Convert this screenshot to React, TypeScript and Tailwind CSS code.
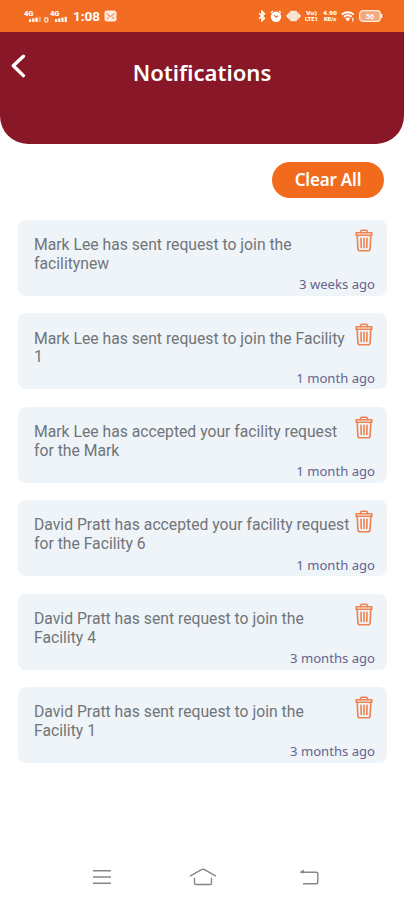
const notifications = [
  { id: 1, lines: ['Mark Lee has sent request to join the', 'facilitynew'], time: '3 weeks ago' },
  { id: 2, lines: ['Mark Lee has sent request to join the Facility', '1'], time: '1 month ago' },
  { id: 3, lines: ['Mark Lee has accepted your facility request', 'for the Mark'], time: '1 month ago' },
  { id: 4, lines: ['David Pratt has accepted your facility request', 'for the Facility 6'], time: '1 month ago' },
  { id: 5, lines: ['David Pratt has sent request to join the', 'Facility 4'], time: '3 months ago' },
  { id: 6, lines: ['David Pratt has sent request to join the', 'Facility 1'], time: '3 months ago' },
]

function TrashIcon() {
  return (
    <svg width="18" height="23" viewBox="0 0 18 23" fill="none" stroke="#ef8250" strokeWidth="1.6" strokeLinejoin="round" strokeLinecap="round">
      <path d="M1.2 3.8h15.6v2.4H1.2z" />
      <path d="M5.6 3.6V2.6Q5.6 1.2 7 1.2h4q1.4 0 1.4 1.4v1" />
      <path d="M2.2 6.6l.7 13.2q.2 2 2.2 2h7.8q2 0 2.2-2l.7-13.2" />
      <path d="M6 9.2l.2 9.4M9 9.2v9.4M12 9.2l-.2 9.4" />
    </svg>
  )
}

function Signal({ bars }: { bars: number }) {
  return (
    <svg width="18" height="13" viewBox="0 0 18 13" fill="#fff">
      <text x="0" y="6" fontSize="7" fontWeight="900" textLength="9.5" lengthAdjust="spacingAndGlyphs" fontFamily="Roboto, sans-serif">4G</text>
      {[0, 1, 2, 3].map(i => (
        <rect key={i} x={5 + i * 3.2} y={9.2 - i * 0.8} width="2.2" height={2.8 + i * 0.8} opacity={i < bars ? 1 : 0.4} />
      ))}
    </svg>
  )
}

function StatusBar() {
  return (
    <div className="flex h-8 items-center justify-between bg-[#f26d21] pr-[21px] pl-[24px] text-white">
      <div className="flex items-center">
        <Signal bars={3} />
        <svg className="mr-px ml-[2px]" width="5" height="13" viewBox="0 0 5 13" fill="none" stroke="#fff" opacity=".8">
          <rect x=".8" y="7.8" width="3" height="4" rx=".8" strokeWidth="1.3" />
        </svg>
        <Signal bars={4} />
        <span className="ml-[5px] font-['Roboto',sans-serif] text-[13.5px] leading-4 font-bold">1:08</span>
        <svg className="ml-[4px]" width="13" height="12" viewBox="0 0 13 12">
          <rect x=".5" y=".5" width="12" height="11" rx="2.5" fill="#fff" opacity=".85" />
          <path d="M2.5 3.5l4 3 4-3M3 9l2-2M10 9L8 7" fill="none" stroke="#f26d21" strokeWidth="1" />
        </svg>
      </div>
      <div className="flex items-center">
        <svg width="8" height="12" viewBox="0 0 8 12" fill="none" stroke="#fff" strokeWidth="1.5">
          <path d="M1 3.3l5.5 5L4 10.8V1.2l2.5 2.5-5.5 5" />
        </svg>
        <svg className="ml-[4px]" width="12" height="13" viewBox="0 0 12 13">
          <circle cx="6" cy="6.8" r="5.2" fill="#fff" />
          <path d="M1 2.8l2-1.7M11 2.8L9 1.1" fill="none" stroke="#fff" strokeWidth="1.3" />
          <path d="M4.3 5.2L6 7.2l2.4-1.5" fill="none" stroke="#f26d21" strokeWidth="1.2" />
        </svg>
        <svg className="ml-[4px]" width="15" height="12" viewBox="0 0 15 12" fill="#fff">
          <rect x="3.2" y=".8" width="8.6" height="10.4" rx="2.6" opacity=".8" />
          <path d="M3 2.8v6.4L0 6zM12 2.8v6.4L15 6z" opacity=".9" />
        </svg>
        <div className="ml-[4px] flex w-[14px] flex-col">
          <svg width="14" height="7" viewBox="0 0 14 7" fill="#fff" fontFamily="Roboto, sans-serif" fontWeight="900">
            <text x="1" y="5.6" fontSize="5.2" textLength="11" lengthAdjust="spacingAndGlyphs">Vo)</text>
          </svg>
          <svg width="14" height="7" viewBox="0 0 14 7" fill="#fff" fontFamily="Roboto, sans-serif" fontWeight="900">
            <text x="0" y="5.4" fontSize="5.2" textLength="13" lengthAdjust="spacingAndGlyphs">LTE1</text>
          </svg>
        </div>
        <div className="ml-[4px] flex w-[14px] flex-col">
          <svg width="14" height="7" viewBox="0 0 14 7" fill="#fff" fontFamily="Roboto, sans-serif" fontWeight="900">
            <text x="0" y="5.6" fontSize="5.2" textLength="14" lengthAdjust="spacingAndGlyphs">4.90</text>
          </svg>
          <svg width="14" height="7" viewBox="0 0 14 7" fill="#fff" fontFamily="Roboto, sans-serif" fontWeight="900">
            <text x="1" y="5.4" fontSize="5.2" textLength="12" lengthAdjust="spacingAndGlyphs">KB/s</text>
          </svg>
        </div>
        <svg className="ml-[4px]" width="14" height="11" viewBox="0 0 14 11" fill="none" stroke="#fff" strokeWidth="1.9">
          <path d="M.7 3.4q6-4.4 12 0M2.8 5.7q3.9-2.8 7.8 0" />
          <path d="M4.2 7.4q2.5-1.6 5 0L6.7 10.4z" fill="#fff" stroke="none" />
          <path d="M11.8 6.8v3.6" strokeWidth="1.2" />
        </svg>
        <svg className="ml-[4px]" width="24" height="12" viewBox="0 0 24 12">
          <rect x=".7" y=".7" width="20.6" height="10.6" rx="3" fill="#fff" fillOpacity=".4" stroke="#fff" strokeOpacity=".85" strokeWidth="1.2" />
          <path d="M22.4 4v4" stroke="#fff" strokeWidth="1.6" />
          <text x="11" y="8.8" fontSize="7.5" fontWeight="700" textAnchor="middle" fill="#fff" fontFamily="Roboto, sans-serif">56</text>
        </svg>
      </div>
    </div>
  )
}

export default function App() {
  return (
    <div className="flex h-[900px] w-[404px] flex-col overflow-hidden bg-white">
      <StatusBar />

      {/* Header */}
      <header className="grid h-28 grid-cols-[40px_1fr_40px] items-start rounded-b-[28px] bg-[#881727] text-white">
        <button className="mt-[21px] ml-[11px]" aria-label="Back">
          <svg width="15" height="25" viewBox="0 0 15 25" fill="none" stroke="#fff" strokeWidth="3.4" strokeLinecap="round" strokeLinejoin="round">
            <path d="M12.4 3.2L2.3 12.8l10.1 9.8" />
          </svg>
        </button>
        <h1 className="mt-6 text-center font-['Noto_Sans','Open_Sans',sans-serif] text-[22.1px] leading-8 font-semibold">Notifications</h1>
      </header>

      <div className="flex justify-end pt-[18px] pr-[20px]">
        <button className="h-9 w-28 rounded-full bg-[#f26a1b] font-['Noto_Sans','Open_Sans',sans-serif] text-[17px] leading-9 font-semibold tracking-[-0.2px] text-white">
          Clear All
        </button>
      </div>

      {/* Notification list */}
      <ul className="mt-[22px] flex flex-col gap-[17.4px] pr-[17px] pl-[18px]">
        {notifications.map(n => (
          <li key={n.id} className="flex h-[76px] flex-col justify-between rounded-lg bg-[#eef4f8] pr-3 pb-[2.6px] pl-4">
            <div className="flex justify-between">
              <p className="pt-[16.2px] font-['Roboto',sans-serif] text-[15.72px] leading-[18.8px] whitespace-nowrap text-[#717478]">
                {n.lines[0]}
                <br />
                {n.lines[1]}
              </p>
              <button className="mt-[9.4px] mr-[2px] h-[23px] w-[18px] shrink-0" aria-label="Delete">
                <TrashIcon />
              </button>
            </div>
            <span className="self-end font-['Noto_Sans','Open_Sans',sans-serif] text-[13.1px] leading-[18px] text-[#66638f]">{n.time}</span>
          </li>
        ))}
      </ul>

      {/* System navigation */}
      <nav className="mt-auto flex h-[46px] items-center pl-[92px]">
        <svg width="20" height="16" viewBox="0 0 20 16" stroke="#858585" strokeWidth="1.4">
          <path d="M1 1.8h18M1 8h18M1 14.3h18" />
        </svg>
        <svg className="ml-[77px]" width="28" height="18" viewBox="0 0 28 18" fill="none" stroke="#858585" strokeWidth="1.4" strokeLinejoin="round">
          <path d="M1 8.2L12.5 1.7q1.5-.8 3 0L27 8.2M5.5 9.8v5.4q0 1.3 1.3 1.3h14.4q1.3 0 1.3-1.3V9.8" />
        </svg>
        <svg className="ml-[82px]" width="20" height="17" viewBox="0 0 20 17" fill="none" stroke="#858585" strokeWidth="1.4">
          <path d="M2 3.2h15q1.8 0 1.8 1.8v8q0 1.8-1.8 1.8H4" />
          <path d="M.5 3.2L4.8.6v4z" fill="#858585" stroke="none" />
        </svg>
      </nav>
    </div>
  )
}
